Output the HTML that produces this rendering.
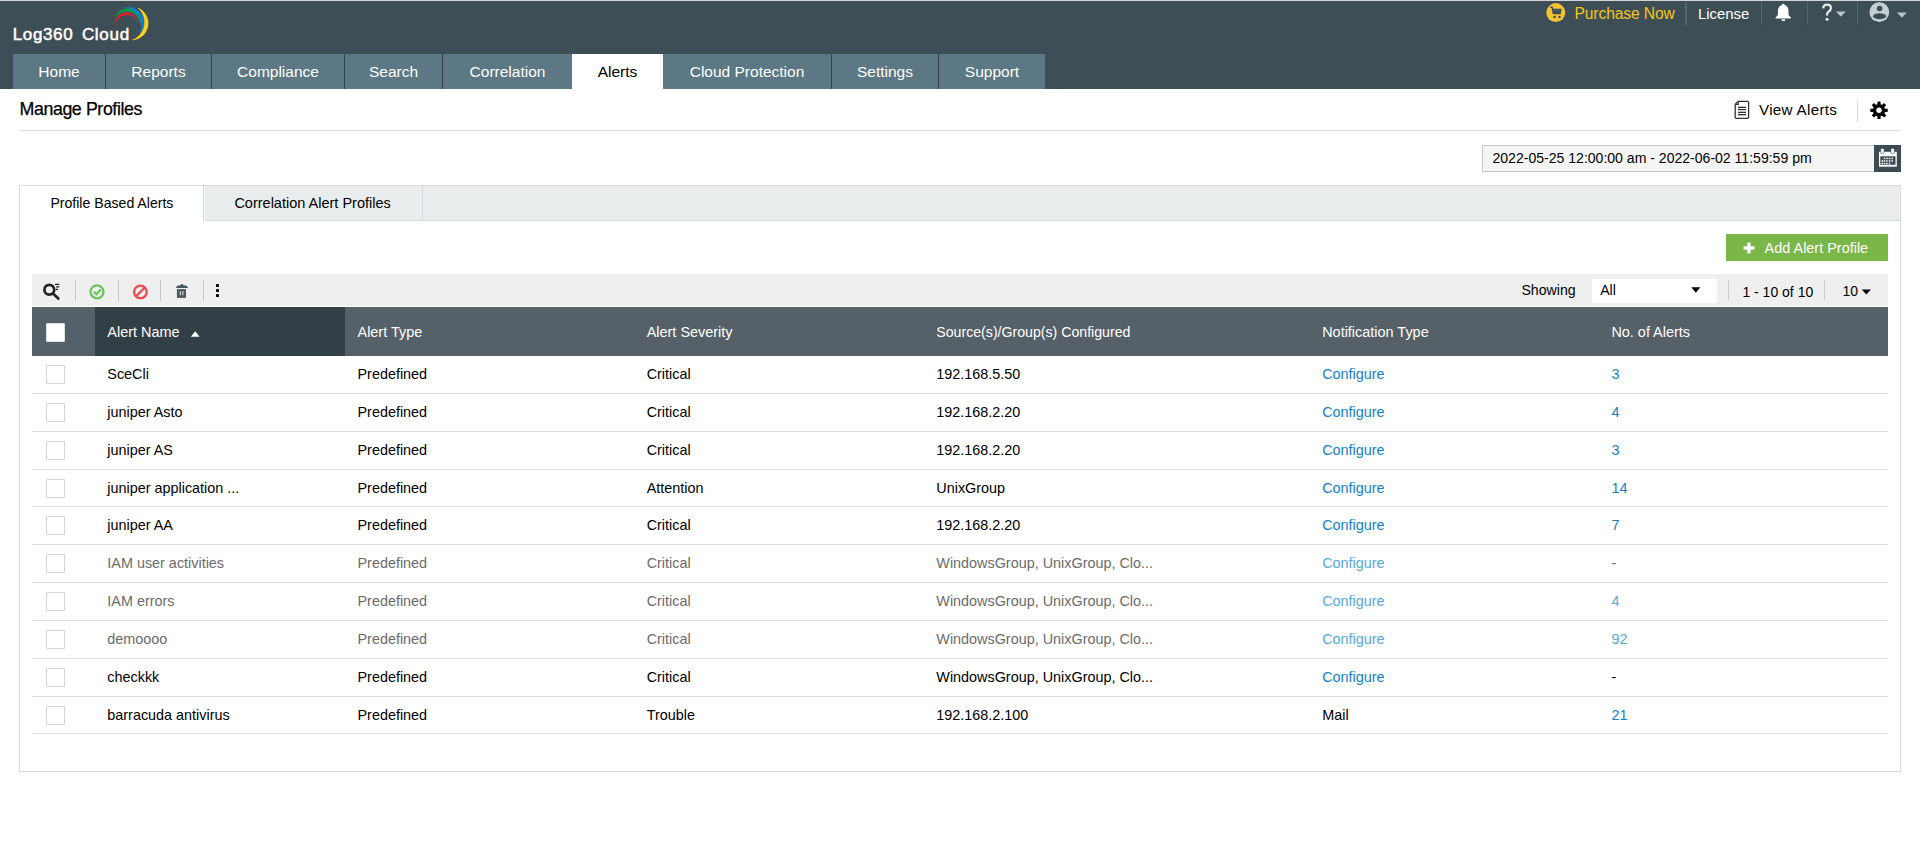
<!DOCTYPE html>
<html><head><meta charset="utf-8">
<style>
*{box-sizing:border-box;margin:0;padding:0}
html,body{width:1920px;height:851px;overflow:hidden;background:#fff;font-family:"Liberation Sans", sans-serif;color:#000}
.a{position:absolute;white-space:nowrap}
svg.a{overflow:visible}
</style></head><body>
<div class="a" style="left:0px;top:0px;width:1920px;height:89px;background:#3d4e56;"></div>
<div class="a" style="left:0px;top:0px;width:1920px;height:1px;background:#d4d4d4;"></div>
<div class="a" style="left:12.7px;top:25px;font-size:17px;line-height:20.4px;color:#fff;font-weight:normal;letter-spacing:0.65px;-webkit-text-stroke:0.5px #fff">Log360</div>
<div class="a" style="left:81.9px;top:25px;font-size:17px;line-height:20.4px;color:#fff;font-weight:normal;letter-spacing:0.7px;-webkit-text-stroke:0.5px #fff">Cloud</div>
<svg class="a" style="left:108px;top:4px;" width="48" height="40" viewBox="0 0 48 40">
<path d="M7.3 20.7 A11.2 11.2 0 0 1 29.1 16.2 A12 12 0 0 0 7.3 20.7 Z" fill="#e0212e" stroke="#e0212e" stroke-width="0.5"/>
<path d="M7.8 12.7 A12.6 12.6 0 0 1 32 19.3 A13.4 13.4 0 0 0 7.8 12.7 Z" fill="#0e9d47" stroke="#0e9d47" stroke-width="0.5"/>
<path d="M17.4 3.5 A15.4 15.4 0 0 1 32 28.7 A18.5 18.5 0 0 0 17.4 3.5 Z" fill="#0d7fc9" stroke="#0d7fc9" stroke-width="0.5"/>
<path d="M30.1 4 A16.7 16.7 0 0 1 24.4 36 A19 19 0 0 0 30.1 4 Z" fill="#f8d21c" stroke="#f8d21c" stroke-width="0.5"/>
</svg>
<svg class="a" style="left:1546px;top:3px;" width="20" height="20" viewBox="0 0 20 20">
<circle cx="9.8" cy="9.6" r="9.5" fill="#f4c430"/>
<path d="M4.2 4.3 H6.2 L7.4 10.6 H14 L14.8 6.6 H7" fill="none" stroke="#3d4e56" stroke-width="1.5" stroke-linejoin="round"/>
<rect x="7.3" y="7.2" width="6.8" height="3" fill="#3d4e56"/>
<rect x="7.4" y="12.9" width="2.2" height="2.2" fill="#3d4e56"/>
<rect x="12.4" y="12.9" width="2.2" height="2.2" fill="#3d4e56"/>
</svg>
<div class="a" style="left:1574.5px;top:5px;font-size:15.6px;line-height:18.72px;color:#f5c616;font-weight:normal;letter-spacing:-0.1px;">Purchase Now</div>
<div class="a" style="left:1685px;top:2px;width:1.5px;height:23px;background:#56646b;"></div>
<div class="a" style="left:1698px;top:6px;font-size:14.9px;line-height:17.88px;color:#fff;font-weight:normal;letter-spacing:0px;">License</div>
<div class="a" style="left:1760.5px;top:2px;width:1.5px;height:23px;background:#56646b;"></div>
<svg class="a" style="left:1774px;top:3px;" width="19" height="19" viewBox="0 0 19 19">
<path d="M9.3 0.8 C10.2 0.8 10.6 1.4 10.6 2.0 C13.3 2.7 14.5 5 14.5 8 V12 L16.8 14.6 V15.4 H1.6 V14.6 L3.9 12 V8 C3.9 5 5.1 2.7 7.9 2.0 C7.9 1.4 8.3 0.8 9.3 0.8 Z" fill="#fff"/>
<rect x="7.6" y="16.2" width="3.6" height="1.8" rx="0.8" fill="#fff"/>
</svg>
<div class="a" style="left:1806.5px;top:2px;width:1.5px;height:23px;background:#56646b;"></div>
<svg class="a" style="left:1820px;top:3px;" width="14" height="19" viewBox="0 0 14 19"><path d="M3.2 5.4 Q3.4 1.7 7.1 1.7 Q10.9 1.7 10.9 5.1 Q10.9 7.3 8.6 8.7 Q7.1 9.7 7.1 11.6 V12.6" fill="none" stroke="#e6eaec" stroke-width="2.2"/><circle cx="7.1" cy="16.2" r="1.5" fill="#e6eaec"/></svg>
<svg class="a" style="left:1836px;top:11px;" width="10" height="6" viewBox="0 0 10 6"><path d="M0 0.5 H9.8 L4.9 5.8 Z" fill="#b7c4c8"/></svg>
<div class="a" style="left:1856.5px;top:2px;width:1.5px;height:23px;background:#56646b;"></div>
<svg class="a" style="left:1869px;top:2px;clip-path:circle(10.1px at 10.3px 10.1px)" width="21" height="21" viewBox="0 0 21 21">
<circle cx="10.3" cy="10.1" r="10.1" fill="#c2ced2"/>
<circle cx="10.6" cy="6.5" r="2.8" fill="#3d4e56"/>
<ellipse cx="10.6" cy="14.2" rx="6.5" ry="3" fill="#3d4e56"/>
</svg>
<svg class="a" style="left:1897px;top:12px;" width="10" height="6" viewBox="0 0 10 6"><path d="M0 0.5 H9.8 L4.9 5.8 Z" fill="#b7c4c8"/></svg>
<div class="a" style="left:13px;top:54px;width:92px;height:35px;background:#5b7884"></div>
<div class="a" style="left:13px;top:61.13px;width:92px;font-size:15.5px;line-height:21px;text-align:center;color:#fff">Home</div>
<div class="a" style="left:106px;top:54px;width:105px;height:35px;background:#5b7884"></div>
<div class="a" style="left:106px;top:61.13px;width:105px;font-size:15.5px;line-height:21px;text-align:center;color:#fff">Reports</div>
<div class="a" style="left:212px;top:54px;width:132px;height:35px;background:#5b7884"></div>
<div class="a" style="left:212px;top:61.13px;width:132px;font-size:15.5px;line-height:21px;text-align:center;color:#fff">Compliance</div>
<div class="a" style="left:345px;top:54px;width:97px;height:35px;background:#5b7884"></div>
<div class="a" style="left:345px;top:61.13px;width:97px;font-size:15.5px;line-height:21px;text-align:center;color:#fff">Search</div>
<div class="a" style="left:443px;top:54px;width:129px;height:35px;background:#5b7884"></div>
<div class="a" style="left:443px;top:61.13px;width:129px;font-size:15.5px;line-height:21px;text-align:center;color:#fff">Correlation</div>
<div class="a" style="left:572px;top:54px;width:91px;height:35px;background:#fff"></div>
<div class="a" style="left:572px;top:61.13px;width:91px;font-size:15.5px;line-height:21px;text-align:center;color:#000">Alerts</div>
<div class="a" style="left:663px;top:54px;width:168px;height:35px;background:#5b7884"></div>
<div class="a" style="left:663px;top:61.13px;width:168px;font-size:15.5px;line-height:21px;text-align:center;color:#fff">Cloud Protection</div>
<div class="a" style="left:832px;top:54px;width:106px;height:35px;background:#5b7884"></div>
<div class="a" style="left:832px;top:61.13px;width:106px;font-size:15.5px;line-height:21px;text-align:center;color:#fff">Settings</div>
<div class="a" style="left:939px;top:54px;width:106px;height:35px;background:#5b7884"></div>
<div class="a" style="left:939px;top:61.13px;width:106px;font-size:15.5px;line-height:21px;text-align:center;color:#fff">Support</div>
<div class="a" style="left:105px;top:54px;width:1px;height:35px;background:#34434a;"></div>
<div class="a" style="left:211px;top:54px;width:1px;height:35px;background:#34434a;"></div>
<div class="a" style="left:344px;top:54px;width:1px;height:35px;background:#34434a;"></div>
<div class="a" style="left:442px;top:54px;width:1px;height:35px;background:#34434a;"></div>
<div class="a" style="left:831px;top:54px;width:1px;height:35px;background:#34434a;"></div>
<div class="a" style="left:938px;top:54px;width:1px;height:35px;background:#34434a;"></div>
<div class="a" style="left:19.5px;top:99px;font-size:17.8px;line-height:21.36px;color:#000;font-weight:normal;letter-spacing:-0.4px;-webkit-text-stroke:0.25px #000">Manage Profiles</div>
<div class="a" style="left:19px;top:130px;width:1882px;height:1px;background:#dcdcdc;"></div>
<svg class="a" style="left:1734px;top:100px;" width="16" height="20" viewBox="0 0 16 20">
<path d="M4.3 1.3 H13.5 Q14.6 1.3 14.6 2.4 V17.2 Q14.6 18.3 13.5 18.3 H2.3 Q1.2 18.3 1.2 17.2 V4.4 Z" fill="#fff" stroke="#333" stroke-width="1.3" stroke-linejoin="round"/>
<path d="M1.2 4.4 H4.3 V1.3" fill="none" stroke="#333" stroke-width="1.1"/>
<rect x="4" y="6.7" width="8" height="1.3" fill="#333"/>
<rect x="4" y="8.9" width="8" height="1.3" fill="#333"/>
<rect x="4" y="11.7" width="8" height="1.3" fill="#333"/>
<rect x="4" y="14" width="8" height="1.3" fill="#333"/>
</svg>
<div class="a" style="left:1759px;top:101px;font-size:15.2px;line-height:18.24px;color:#000;font-weight:normal;letter-spacing:0.3px;">View Alerts</div>
<div class="a" style="left:1857px;top:101px;width:1px;height:21px;background:#d4d4d4;"></div>
<svg class="a" style="left:1870px;top:101px;" width="18" height="19" viewBox="0 0 18 19"><g transform="translate(0,0.3)"><rect x="7.4" y="0.3" width="3.2" height="4" rx="0.4" transform="rotate(0 9 9)" fill="#000"/><rect x="7.4" y="0.3" width="3.2" height="4" rx="0.4" transform="rotate(45 9 9)" fill="#000"/><rect x="7.4" y="0.3" width="3.2" height="4" rx="0.4" transform="rotate(90 9 9)" fill="#000"/><rect x="7.4" y="0.3" width="3.2" height="4" rx="0.4" transform="rotate(135 9 9)" fill="#000"/><rect x="7.4" y="0.3" width="3.2" height="4" rx="0.4" transform="rotate(180 9 9)" fill="#000"/><rect x="7.4" y="0.3" width="3.2" height="4" rx="0.4" transform="rotate(225 9 9)" fill="#000"/><rect x="7.4" y="0.3" width="3.2" height="4" rx="0.4" transform="rotate(270 9 9)" fill="#000"/><rect x="7.4" y="0.3" width="3.2" height="4" rx="0.4" transform="rotate(315 9 9)" fill="#000"/><circle cx="9" cy="9" r="6.2" fill="#000"/><circle cx="9" cy="9" r="2.7" fill="#fff"/></g></svg>
<div class="a" style="left:1482px;top:145px;width:392px;height:27px;background:#f5f5f5;border:1px solid #c9c9c9;border-right:none"></div>
<div class="a" style="left:1492.5px;top:150px;font-size:14.05px;line-height:16.86px;color:#000;font-weight:normal;letter-spacing:0px;">2022-05-25 12:00:00 am - 2022-06-02 11:59:59 pm</div>
<div class="a" style="left:1874px;top:145px;width:27px;height:27px;background:#3d4c54;"></div>
<svg class="a" style="left:1878px;top:148px;" width="20" height="20" viewBox="0 0 20 20">
<rect x="1" y="3.8" width="17.8" height="14.9" fill="#fff"/>
<rect x="2.3" y="8.3" width="15.2" height="8.5" fill="#3d4c54"/>
<rect x="2.7" y="0.5" width="3.4" height="4.8" rx="0.6" fill="#fff" stroke="#3d4c54" stroke-width="0.6"/>
<rect x="12.9" y="0.5" width="3.4" height="4.8" rx="0.6" fill="#fff" stroke="#3d4c54" stroke-width="0.6"/>
<rect x="5.7" y="9.7" width="1.5" height="1.5" fill="#fff"/><rect x="8.1" y="9.7" width="1.5" height="1.5" fill="#fff"/><rect x="10.8" y="9.7" width="1.5" height="1.5" fill="#fff"/><rect x="13.4" y="9.7" width="1.5" height="1.5" fill="#fff"/><rect x="3.5" y="12.2" width="1.5" height="1.5" fill="#fff"/><rect x="5.7" y="12.2" width="1.5" height="1.5" fill="#fff"/><rect x="8.1" y="12.2" width="1.5" height="1.5" fill="#fff"/><rect x="10.8" y="12.2" width="1.5" height="1.5" fill="#fff"/><rect x="13.4" y="12.2" width="1.5" height="1.5" fill="#fff"/><rect x="3.5" y="14.8" width="1.5" height="1.5" fill="#fff"/><rect x="5.7" y="14.8" width="1.5" height="1.5" fill="#fff"/><rect x="8.1" y="14.8" width="1.5" height="1.5" fill="#fff"/><rect x="10.8" y="14.8" width="1.5" height="1.5" fill="#fff"/></svg>
<div class="a" style="left:19px;top:185px;width:1882px;height:587px;background:transparent;border:1px solid #d9dde0"></div>
<div class="a" style="left:20px;top:186px;width:1880px;height:35px;background:#e9edee;border-bottom:1px solid #d5d9dc"></div>
<div class="a" style="left:20px;top:186px;width:184px;height:35px;background:#fff;"></div>
<div class="a" style="left:203px;top:186px;width:1px;height:35px;background:#d5d9dc;"></div>
<div class="a" style="left:204px;top:186px;width:1px;height:35px;background:#f4f6f7;"></div>
<div class="a" style="left:422px;top:186px;width:1px;height:35px;background:#d5d9dc;"></div>
<div class="a" style="left:50.4px;top:195px;font-size:14.1px;line-height:16.92px;color:#000;font-weight:normal;letter-spacing:0px;">Profile Based Alerts</div>
<div class="a" style="left:234.4px;top:195px;font-size:14.5px;line-height:17.4px;color:#000;font-weight:normal;letter-spacing:0px;">Correlation Alert Profiles</div>
<div class="a" style="left:1726px;top:234px;width:162px;height:27px;background:#7ab648;"></div>
<svg class="a" style="left:1743px;top:242px;" width="12" height="12" viewBox="0 0 12 12"><rect x="4.3" y="0.6" width="3.3" height="10.8" fill="#fff"/><rect x="0.6" y="4.3" width="10.8" height="3.3" fill="#fff"/></svg>
<div class="a" style="left:1764.6px;top:240px;font-size:14.45px;line-height:17.34px;color:#fff;font-weight:normal;letter-spacing:0px;">Add Alert Profile</div>
<div class="a" style="left:32px;top:274px;width:1856px;height:32px;background:#efefef;"></div>
<svg class="a" style="left:40px;top:280px;" width="22" height="22" viewBox="0 0 22 22">
<circle cx="9.3" cy="9.75" r="4.9" fill="none" stroke="#222" stroke-width="2.7"/>
<path d="M13 13.5 L18.3 18.5" stroke="#222" stroke-width="2.7" stroke-linecap="round"/>
<path d="M15 4.3 H19.3 M16 6.8 H19.3 M15.8 9.3 H18" stroke="#222" stroke-width="1.2"/>
</svg>
<div class="a" style="left:75px;top:280px;width:1.2px;height:21px;background:#c6c6c6;"></div>
<div class="a" style="left:118px;top:280px;width:1.2px;height:21px;background:#c6c6c6;"></div>
<div class="a" style="left:160px;top:280px;width:1.2px;height:21px;background:#c6c6c6;"></div>
<div class="a" style="left:203px;top:280px;width:1.2px;height:21px;background:#c6c6c6;"></div>
<svg class="a" style="left:88px;top:283px;" width="18" height="18" viewBox="0 0 18 18">
<circle cx="9" cy="8.8" r="6.5" fill="none" stroke="#6cc45c" stroke-width="2.3"/>
<path d="M5.8 8.7 L8.3 11.2 L12.9 6.4" fill="none" stroke="#6cc45c" stroke-width="2.2"/>
</svg>
<svg class="a" style="left:131px;top:283px;" width="18" height="18" viewBox="0 0 18 18">
<circle cx="9.4" cy="8.9" r="6.3" fill="none" stroke="#ee4a4f" stroke-width="2.3"/>
<path d="M5.2 13.1 L13.6 4.7" stroke="#ee4a4f" stroke-width="2.3"/>
</svg>
<svg class="a" style="left:174px;top:282px;" width="16" height="18" viewBox="0 0 16 18">
<path d="M2 5.9 Q2 3.6 4.5 3.4 L6.5 3.2 Q7 2.1 8 2.1 Q9 2.1 9.5 3.2 L11.5 3.4 Q14 3.6 14 5.9 Z" fill="#4a5960"/>
<rect x="2.9" y="7.1" width="9.1" height="8.8" fill="#4a5960"/>
<rect x="5.8" y="9.2" width="1.1" height="4" fill="#e0e4e6"/>
<rect x="8.3" y="9.2" width="1.1" height="4" fill="#e0e4e6"/>
</svg>
<div class="a" style="left:216px;top:284.4px;width:3px;height:3px;background:#000;border-radius:0.4px"></div>
<div class="a" style="left:216px;top:289.4px;width:3px;height:3px;background:#000;border-radius:0.4px"></div>
<div class="a" style="left:216px;top:294.4px;width:3px;height:3px;background:#000;border-radius:0.4px"></div>
<div class="a" style="left:1521.4px;top:282px;font-size:14.15px;line-height:16.98px;color:#000;font-weight:normal;letter-spacing:0px;">Showing</div>
<div class="a" style="left:1592px;top:279px;width:125px;height:24px;background:#fff;"></div>
<div class="a" style="left:1600.2px;top:282px;font-size:14.1px;line-height:16.92px;color:#000;font-weight:normal;letter-spacing:0px;">All</div>
<svg class="a" style="left:1690px;top:286px;" width="11" height="8" viewBox="0 0 11 8"><path d="M1.3 1.3 H10.3 L5.8 6.7 Z" fill="#000"/></svg>
<div class="a" style="left:1728px;top:280px;width:1px;height:21px;background:#cfcfcf;"></div>
<div class="a" style="left:1742.4px;top:284px;font-size:14.0px;line-height:16.8px;color:#000;font-weight:normal;letter-spacing:0px;">1 - 10 of 10</div>
<div class="a" style="left:1824px;top:280px;width:1px;height:21px;background:#cfcfcf;"></div>
<div class="a" style="left:1842.4px;top:283px;font-size:14.0px;line-height:16.8px;color:#000;font-weight:normal;letter-spacing:0px;">10</div>
<svg class="a" style="left:1860px;top:288px;" width="12" height="8" viewBox="0 0 12 8"><path d="M1.8 1.6 H10.9 L6.35 6.6 Z" fill="#000"/></svg>
<div class="a" style="left:32px;top:307px;width:1856px;height:49px;background:#566069;"></div>
<div class="a" style="left:95px;top:307px;width:250px;height:49px;background:#333f47;"></div>
<div class="a" style="left:46px;top:323px;width:19px;height:19px;background:#fff;border:1px solid #dde1e3;border-radius:1px"></div>
<div class="a" style="left:107.3px;top:324px;font-size:14.45px;line-height:17.34px;color:#fff;font-weight:normal;letter-spacing:0px;">Alert Name</div>
<div class="a" style="left:357.5px;top:324px;font-size:14.45px;line-height:17.34px;color:#fff;font-weight:normal;letter-spacing:0px;">Alert Type</div>
<div class="a" style="left:646.7px;top:324px;font-size:14.45px;line-height:17.34px;color:#fff;font-weight:normal;letter-spacing:0px;">Alert Severity</div>
<div class="a" style="left:936.3px;top:324px;font-size:14.15px;line-height:16.98px;color:#fff;font-weight:normal;letter-spacing:0px;">Source(s)/Group(s) Configured</div>
<div class="a" style="left:1322.2px;top:324px;font-size:14.45px;line-height:17.34px;color:#fff;font-weight:normal;letter-spacing:0px;">Notification Type</div>
<div class="a" style="left:1611.4px;top:324px;font-size:14.45px;line-height:17.34px;color:#fff;font-weight:normal;letter-spacing:0px;">No. of Alerts</div>
<svg class="a" style="left:190px;top:330px;" width="11" height="8" viewBox="0 0 11 8"><path d="M0.8 6.8 H9.6 L5.2 1.2 Z" fill="#fff"/></svg>
<div class="a" style="left:107.3px;top:366px;font-size:14.4px;line-height:17.28px;color:#000;font-weight:normal;letter-spacing:0px;">SceCli</div>
<div class="a" style="left:357.5px;top:366px;font-size:14.4px;line-height:17.28px;color:#000;font-weight:normal;letter-spacing:0px;">Predefined</div>
<div class="a" style="left:646.7px;top:366px;font-size:14.4px;line-height:17.28px;color:#000;font-weight:normal;letter-spacing:0px;">Critical</div>
<div class="a" style="left:936.3px;top:366px;font-size:14.4px;line-height:17.28px;color:#000;font-weight:normal;letter-spacing:0px;">192.168.5.50</div>
<div class="a" style="left:1322.2px;top:366px;font-size:14.4px;line-height:17.28px;color:#1580cc;font-weight:normal;letter-spacing:0px;">Configure</div>
<div class="a" style="left:1611.4px;top:366px;font-size:14.4px;line-height:17.28px;color:#1580cc;font-weight:normal;letter-spacing:0px;">3</div>
<div class="a" style="left:46px;top:365px;width:19px;height:19px;background:#fff;border:1.5px solid #d3d6d8;border-radius:1px;box-shadow:0 0 1px #e5e5e5"></div>
<div class="a" style="left:32px;top:393px;width:1856px;height:1px;background:#dddddd;"></div>
<div class="a" style="left:107.3px;top:404px;font-size:14.4px;line-height:17.28px;color:#000;font-weight:normal;letter-spacing:0px;">juniper Asto</div>
<div class="a" style="left:357.5px;top:404px;font-size:14.4px;line-height:17.28px;color:#000;font-weight:normal;letter-spacing:0px;">Predefined</div>
<div class="a" style="left:646.7px;top:404px;font-size:14.4px;line-height:17.28px;color:#000;font-weight:normal;letter-spacing:0px;">Critical</div>
<div class="a" style="left:936.3px;top:404px;font-size:14.4px;line-height:17.28px;color:#000;font-weight:normal;letter-spacing:0px;">192.168.2.20</div>
<div class="a" style="left:1322.2px;top:404px;font-size:14.4px;line-height:17.28px;color:#1580cc;font-weight:normal;letter-spacing:0px;">Configure</div>
<div class="a" style="left:1611.4px;top:404px;font-size:14.4px;line-height:17.28px;color:#1580cc;font-weight:normal;letter-spacing:0px;">4</div>
<div class="a" style="left:46px;top:403px;width:19px;height:19px;background:#fff;border:1.5px solid #d3d6d8;border-radius:1px;box-shadow:0 0 1px #e5e5e5"></div>
<div class="a" style="left:32px;top:431px;width:1856px;height:1px;background:#dddddd;"></div>
<div class="a" style="left:107.3px;top:442px;font-size:14.4px;line-height:17.28px;color:#000;font-weight:normal;letter-spacing:0px;">juniper AS</div>
<div class="a" style="left:357.5px;top:442px;font-size:14.4px;line-height:17.28px;color:#000;font-weight:normal;letter-spacing:0px;">Predefined</div>
<div class="a" style="left:646.7px;top:442px;font-size:14.4px;line-height:17.28px;color:#000;font-weight:normal;letter-spacing:0px;">Critical</div>
<div class="a" style="left:936.3px;top:442px;font-size:14.4px;line-height:17.28px;color:#000;font-weight:normal;letter-spacing:0px;">192.168.2.20</div>
<div class="a" style="left:1322.2px;top:442px;font-size:14.4px;line-height:17.28px;color:#1580cc;font-weight:normal;letter-spacing:0px;">Configure</div>
<div class="a" style="left:1611.4px;top:442px;font-size:14.4px;line-height:17.28px;color:#1580cc;font-weight:normal;letter-spacing:0px;">3</div>
<div class="a" style="left:46px;top:441px;width:19px;height:19px;background:#fff;border:1.5px solid #d3d6d8;border-radius:1px;box-shadow:0 0 1px #e5e5e5"></div>
<div class="a" style="left:32px;top:469px;width:1856px;height:1px;background:#dddddd;"></div>
<div class="a" style="left:107.3px;top:480px;font-size:14.4px;line-height:17.28px;color:#000;font-weight:normal;letter-spacing:0px;">juniper application ...</div>
<div class="a" style="left:357.5px;top:480px;font-size:14.4px;line-height:17.28px;color:#000;font-weight:normal;letter-spacing:0px;">Predefined</div>
<div class="a" style="left:646.7px;top:480px;font-size:14.4px;line-height:17.28px;color:#000;font-weight:normal;letter-spacing:0px;">Attention</div>
<div class="a" style="left:936.3px;top:480px;font-size:14.4px;line-height:17.28px;color:#000;font-weight:normal;letter-spacing:0px;">UnixGroup</div>
<div class="a" style="left:1322.2px;top:480px;font-size:14.4px;line-height:17.28px;color:#1580cc;font-weight:normal;letter-spacing:0px;">Configure</div>
<div class="a" style="left:1611.4px;top:480px;font-size:14.4px;line-height:17.28px;color:#1580cc;font-weight:normal;letter-spacing:0px;">14</div>
<div class="a" style="left:46px;top:479px;width:19px;height:19px;background:#fff;border:1.5px solid #d3d6d8;border-radius:1px;box-shadow:0 0 1px #e5e5e5"></div>
<div class="a" style="left:32px;top:506px;width:1856px;height:1px;background:#dddddd;"></div>
<div class="a" style="left:107.3px;top:517px;font-size:14.4px;line-height:17.28px;color:#000;font-weight:normal;letter-spacing:0px;">juniper AA</div>
<div class="a" style="left:357.5px;top:517px;font-size:14.4px;line-height:17.28px;color:#000;font-weight:normal;letter-spacing:0px;">Predefined</div>
<div class="a" style="left:646.7px;top:517px;font-size:14.4px;line-height:17.28px;color:#000;font-weight:normal;letter-spacing:0px;">Critical</div>
<div class="a" style="left:936.3px;top:517px;font-size:14.4px;line-height:17.28px;color:#000;font-weight:normal;letter-spacing:0px;">192.168.2.20</div>
<div class="a" style="left:1322.2px;top:517px;font-size:14.4px;line-height:17.28px;color:#1580cc;font-weight:normal;letter-spacing:0px;">Configure</div>
<div class="a" style="left:1611.4px;top:517px;font-size:14.4px;line-height:17.28px;color:#1580cc;font-weight:normal;letter-spacing:0px;">7</div>
<div class="a" style="left:46px;top:516px;width:19px;height:19px;background:#fff;border:1.5px solid #d3d6d8;border-radius:1px;box-shadow:0 0 1px #e5e5e5"></div>
<div class="a" style="left:32px;top:544px;width:1856px;height:1px;background:#dddddd;"></div>
<div class="a" style="left:107.3px;top:555px;font-size:14.4px;line-height:17.28px;color:#6b6b6b;font-weight:normal;letter-spacing:0px;">IAM user activities</div>
<div class="a" style="left:357.5px;top:555px;font-size:14.4px;line-height:17.28px;color:#6b6b6b;font-weight:normal;letter-spacing:0px;">Predefined</div>
<div class="a" style="left:646.7px;top:555px;font-size:14.4px;line-height:17.28px;color:#6b6b6b;font-weight:normal;letter-spacing:0px;">Critical</div>
<div class="a" style="left:936.3px;top:555px;font-size:14.4px;line-height:17.28px;color:#6b6b6b;font-weight:normal;letter-spacing:0px;">WindowsGroup, UnixGroup, Clo...</div>
<div class="a" style="left:1322.2px;top:555px;font-size:14.4px;line-height:17.28px;color:#56a8dc;font-weight:normal;letter-spacing:0px;">Configure</div>
<div class="a" style="left:1611.4px;top:555px;font-size:14.4px;line-height:17.28px;color:#6b6b6b;font-weight:normal;letter-spacing:0px;">-</div>
<div class="a" style="left:46px;top:554px;width:19px;height:19px;background:#fff;border:1.5px solid #d3d6d8;border-radius:1px;box-shadow:0 0 1px #e5e5e5"></div>
<div class="a" style="left:32px;top:582px;width:1856px;height:1px;background:#dddddd;"></div>
<div class="a" style="left:107.3px;top:593px;font-size:14.4px;line-height:17.28px;color:#6b6b6b;font-weight:normal;letter-spacing:0px;">IAM errors</div>
<div class="a" style="left:357.5px;top:593px;font-size:14.4px;line-height:17.28px;color:#6b6b6b;font-weight:normal;letter-spacing:0px;">Predefined</div>
<div class="a" style="left:646.7px;top:593px;font-size:14.4px;line-height:17.28px;color:#6b6b6b;font-weight:normal;letter-spacing:0px;">Critical</div>
<div class="a" style="left:936.3px;top:593px;font-size:14.4px;line-height:17.28px;color:#6b6b6b;font-weight:normal;letter-spacing:0px;">WindowsGroup, UnixGroup, Clo...</div>
<div class="a" style="left:1322.2px;top:593px;font-size:14.4px;line-height:17.28px;color:#56a8dc;font-weight:normal;letter-spacing:0px;">Configure</div>
<div class="a" style="left:1611.4px;top:593px;font-size:14.4px;line-height:17.28px;color:#56a8dc;font-weight:normal;letter-spacing:0px;">4</div>
<div class="a" style="left:46px;top:592px;width:19px;height:19px;background:#fff;border:1.5px solid #d3d6d8;border-radius:1px;box-shadow:0 0 1px #e5e5e5"></div>
<div class="a" style="left:32px;top:620px;width:1856px;height:1px;background:#dddddd;"></div>
<div class="a" style="left:107.3px;top:631px;font-size:14.4px;line-height:17.28px;color:#6b6b6b;font-weight:normal;letter-spacing:0px;">demoooo</div>
<div class="a" style="left:357.5px;top:631px;font-size:14.4px;line-height:17.28px;color:#6b6b6b;font-weight:normal;letter-spacing:0px;">Predefined</div>
<div class="a" style="left:646.7px;top:631px;font-size:14.4px;line-height:17.28px;color:#6b6b6b;font-weight:normal;letter-spacing:0px;">Critical</div>
<div class="a" style="left:936.3px;top:631px;font-size:14.4px;line-height:17.28px;color:#6b6b6b;font-weight:normal;letter-spacing:0px;">WindowsGroup, UnixGroup, Clo...</div>
<div class="a" style="left:1322.2px;top:631px;font-size:14.4px;line-height:17.28px;color:#56a8dc;font-weight:normal;letter-spacing:0px;">Configure</div>
<div class="a" style="left:1611.4px;top:631px;font-size:14.4px;line-height:17.28px;color:#56a8dc;font-weight:normal;letter-spacing:0px;">92</div>
<div class="a" style="left:46px;top:630px;width:19px;height:19px;background:#fff;border:1.5px solid #d3d6d8;border-radius:1px;box-shadow:0 0 1px #e5e5e5"></div>
<div class="a" style="left:32px;top:658px;width:1856px;height:1px;background:#dddddd;"></div>
<div class="a" style="left:107.3px;top:669px;font-size:14.4px;line-height:17.28px;color:#000;font-weight:normal;letter-spacing:0px;">checkkk</div>
<div class="a" style="left:357.5px;top:669px;font-size:14.4px;line-height:17.28px;color:#000;font-weight:normal;letter-spacing:0px;">Predefined</div>
<div class="a" style="left:646.7px;top:669px;font-size:14.4px;line-height:17.28px;color:#000;font-weight:normal;letter-spacing:0px;">Critical</div>
<div class="a" style="left:936.3px;top:669px;font-size:14.4px;line-height:17.28px;color:#000;font-weight:normal;letter-spacing:0px;">WindowsGroup, UnixGroup, Clo...</div>
<div class="a" style="left:1322.2px;top:669px;font-size:14.4px;line-height:17.28px;color:#1580cc;font-weight:normal;letter-spacing:0px;">Configure</div>
<div class="a" style="left:1611.4px;top:669px;font-size:14.4px;line-height:17.28px;color:#000;font-weight:normal;letter-spacing:0px;">-</div>
<div class="a" style="left:46px;top:668px;width:19px;height:19px;background:#fff;border:1.5px solid #d3d6d8;border-radius:1px;box-shadow:0 0 1px #e5e5e5"></div>
<div class="a" style="left:32px;top:696px;width:1856px;height:1px;background:#dddddd;"></div>
<div class="a" style="left:107.3px;top:707px;font-size:14.4px;line-height:17.28px;color:#000;font-weight:normal;letter-spacing:0px;">barracuda antivirus</div>
<div class="a" style="left:357.5px;top:707px;font-size:14.4px;line-height:17.28px;color:#000;font-weight:normal;letter-spacing:0px;">Predefined</div>
<div class="a" style="left:646.7px;top:707px;font-size:14.4px;line-height:17.28px;color:#000;font-weight:normal;letter-spacing:0px;">Trouble</div>
<div class="a" style="left:936.3px;top:707px;font-size:14.4px;line-height:17.28px;color:#000;font-weight:normal;letter-spacing:0px;">192.168.2.100</div>
<div class="a" style="left:1322.2px;top:707px;font-size:14.4px;line-height:17.28px;color:#000;font-weight:normal;letter-spacing:0px;">Mail</div>
<div class="a" style="left:1611.4px;top:707px;font-size:14.4px;line-height:17.28px;color:#1580cc;font-weight:normal;letter-spacing:0px;">21</div>
<div class="a" style="left:46px;top:706px;width:19px;height:19px;background:#fff;border:1.5px solid #d3d6d8;border-radius:1px;box-shadow:0 0 1px #e5e5e5"></div>
<div class="a" style="left:32px;top:733px;width:1856px;height:1px;background:#dddddd;"></div>
</body></html>
